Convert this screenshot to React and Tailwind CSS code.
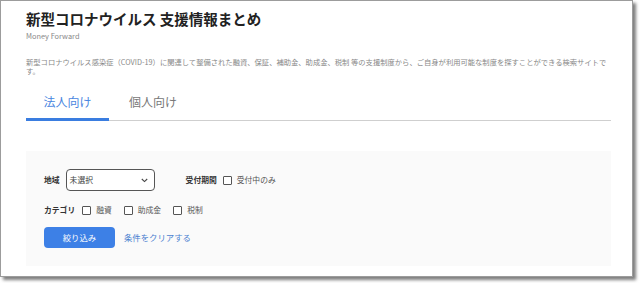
import React from 'react';

const jp = { fontFamily: '"Noto Sans CJK JP", "Noto Sans", sans-serif' };

const Checkbox = ({ label }) => (
  <label className="flex items-center gap-[5px]">
    <span className="w-[9px] h-[9px] border border-[#555] rounded-[1px] bg-white" />
    <span className="text-[7.8px] leading-[12px] text-[#555]">{label}</span>
  </label>
);

const App = () => {
  return (
    <div className="w-[640px] h-[283px] bg-white" style={jp}>
      <div className="w-[633px] h-[277px] bg-white border border-[#9c9c9c] shadow-[3px_3px_3px_rgba(0,0,0,0.5)] pl-[25px] pr-[21px] pt-[9px]">
        {/* Header */}
        <h1 className="text-[14.5px] leading-[18px] font-bold text-[#222]">新型コロナウイルス 支援情報まとめ</h1>
        <p className="mt-[3px] text-[7.4px] leading-[10px] text-[#888]">Money Forward</p>
        <p className="mt-[17px] text-[7.3px] leading-[9px] text-[#888]">
          新型コロナウイルス感染症（COVID-19）に関連して整備された融資、保証、補助金、助成金、税制 等の支援制度から、ご自身が利用可能な制度を探すことができる検索サイトです。
        </p>

        {/* Tabs */}
        <div className="mt-[18px] flex border-b border-[#cfcfcf]">
          <div className="w-[83px] text-center text-[12px] leading-[16px] pb-[8px] border-b-[3px] border-[#3a7de0] -mb-px text-[#4a86df]">法人向け</div>
          <div className="w-[88px] text-center text-[12px] leading-[16px] pb-[8px] text-[#777]">個人向け</div>
        </div>

        {/* Filter */}
        <div className="mt-[30px] h-[115px] bg-[#fafafa] pl-[18px] pt-[18px]">
          <div className="flex items-center h-[22px]">
            <span className="text-[7.8px] font-bold text-[#333]">地域</span>
            <div className="ml-[6px] w-[89px] h-[22px] border border-[#555] rounded-[4px] bg-white flex items-center justify-between pl-[3px] pr-[6px]">
              <span className="text-[7.8px] text-[#444]">未選択</span>
              <svg width="7" height="5" viewBox="0 0 7 5" fill="none">
                <path d="M0.8 1 L3.5 3.6 L6.2 1" stroke="#444" strokeWidth="1.1" />
              </svg>
            </div>
            <span className="ml-[31px] text-[7.8px] font-bold text-[#333]">受付期間</span>
            <div className="ml-[6px]">
              <Checkbox label="受付中のみ" />
            </div>
          </div>

          <div className="mt-[13px] flex items-center h-[12px]">
            <span className="text-[7.8px] font-bold text-[#333]">カテゴリ</span>
            <div className="ml-[7px] flex items-center gap-[12px]">
              <Checkbox label="融資" />
              <Checkbox label="助成金" />
              <Checkbox label="税制" />
            </div>
          </div>

          <div className="mt-[11px] flex items-center">
            <button className="w-[71px] h-[21px] rounded-[4px] bg-[#3d80e6] text-white text-[8.4px]">絞り込み</button>
            <a className="ml-[9px] text-[8.4px] text-[#4a7fd0]">条件をクリアする</a>
          </div>
        </div>
      </div>
    </div>
  );
};

export default App;
